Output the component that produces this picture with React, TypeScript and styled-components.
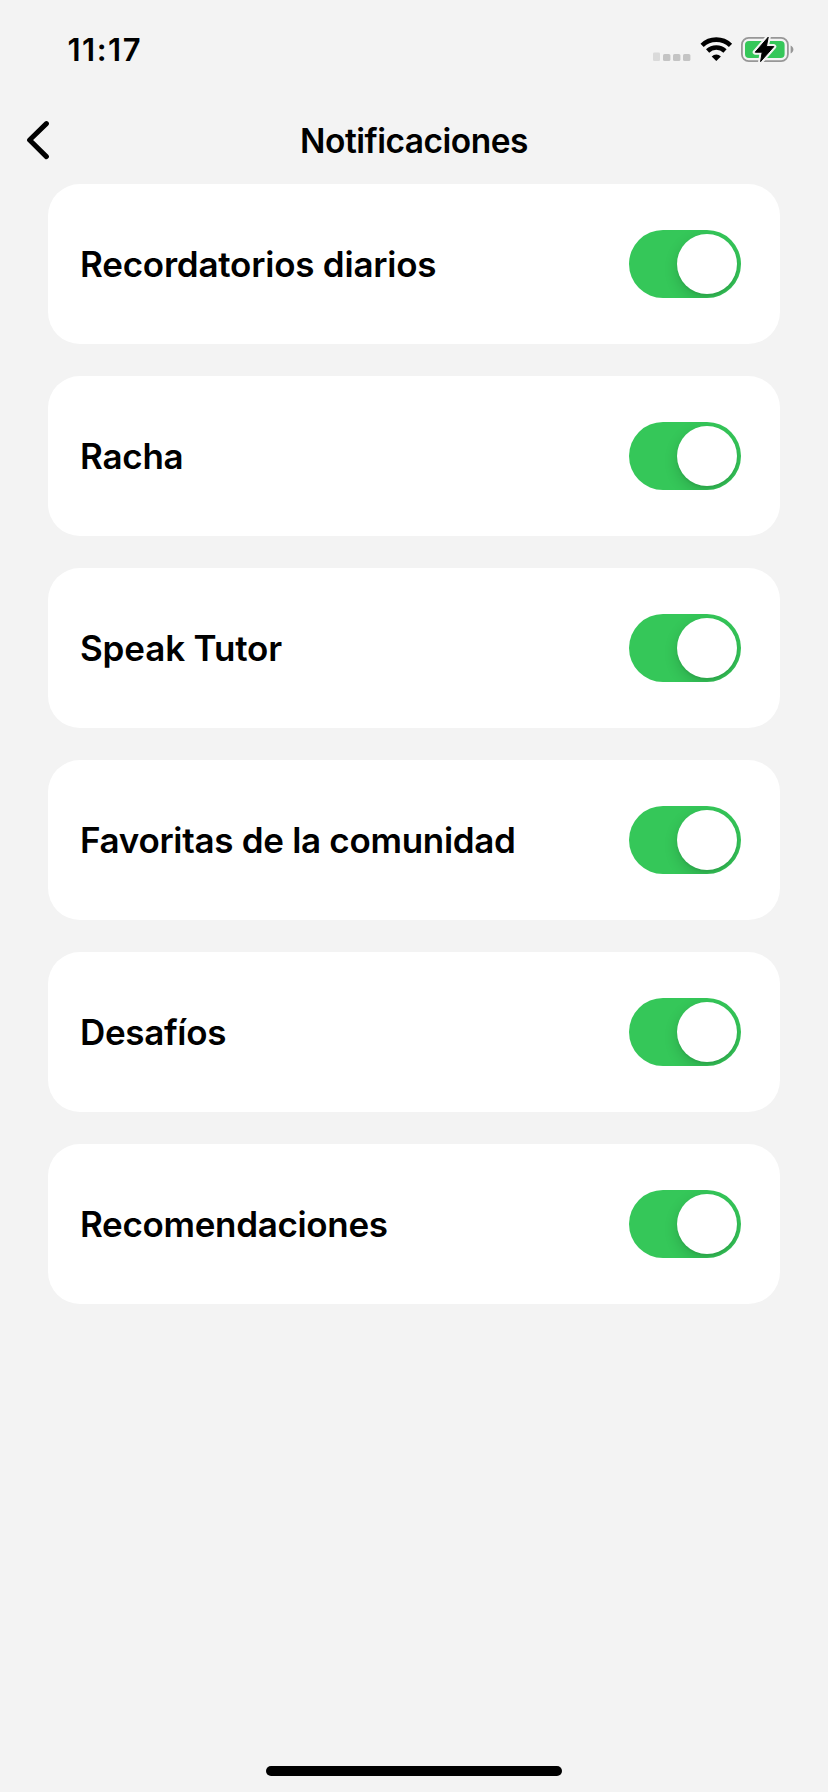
import React, { useState } from "react";
import styled, { createGlobalStyle } from "styled-components";

const GlobalStyle = createGlobalStyle`
  *, *::before, *::after { box-sizing: border-box; }
  html, body { margin: 0; background: #f3f3f3; }
  body {
    font-family: Inter, "Liberation Sans", sans-serif;
    color: #000;
    -webkit-font-smoothing: antialiased;
  }
`;

const Screen = styled.div`
  display: flex;
  flex-direction: column;
  width: 828px;
  height: 1792px;
  background: #f3f3f3;
  overflow: hidden;
`;

const StatusBar = styled.div`
  display: flex;
  align-items: center;
  justify-content: space-between;
  height: 100px;
  padding: 0 34px 0 67.5px;
`;

const Time = styled.span`
  font-size: 31px;
  line-height: 40px;
  font-weight: 600;
  letter-spacing: 1.5px;
`;

const StatusIcons = styled.svg`
  display: block;
  width: 142px;
  height: 32px;
`;

const Header = styled.header`
  display: grid;
  grid-template-columns: 80px 1fr 80px;
  align-items: center;
  height: 84px;
  padding-bottom: 4px;
`;

const BackButton = styled.button`
  display: flex;
  padding: 0 0 0 24px;
  border: 0;
  background: none;
  color: inherit;
`;

const Title = styled.h1`
  margin: 0;
  padding-top: 2px;
  text-align: center;
  font-size: 33.5px;
  line-height: 42px;
  font-weight: 600;
  letter-spacing: -0.5px;
`;

const List = styled.main`
  display: flex;
  flex-direction: column;
  flex: 1;
  gap: 32px;
  padding: 0 48px;
`;

const Card = styled.div`
  display: flex;
  align-items: center;
  justify-content: space-between;
  height: 160px;
  padding: 0 39px 0 32px;
  border-radius: 32px;
  background: #fff;
`;

const Label = styled.span<{ $tracking: number }>`
  font-size: 35px;
  line-height: 44px;
  font-weight: 600;
  letter-spacing: ${({ $tracking }) => $tracking}px;
`;

const Switch = styled.button<{ $on: boolean }>`
  display: flex;
  align-items: center;
  justify-content: ${({ $on }) => ($on ? "flex-end" : "flex-start")};
  width: 112px;
  height: 68px;
  padding: 4px;
  border: 0;
  border-radius: 34px;
  overflow: hidden;
  background: ${({ $on }) => ($on ? "#35c759" : "#e9e9ea")};
`;

const Knob = styled.span`
  width: 60px;
  height: 60px;
  border-radius: 50%;
  background: #fff;
  box-shadow: 0 5px 14px rgba(0, 0, 0, 0.16), 0 2px 2px rgba(0, 0, 0, 0.06);
`;

const HomeArea = styled.footer`
  display: flex;
  justify-content: center;
  padding-bottom: 16px;
`;

const HomeIndicator = styled.div`
  width: 296px;
  height: 10px;
  border-radius: 5px;
  background: #000;
`;

const items = [
  { name: "Recordatorios diarios", tracking: -0.22 },
  { name: "Racha", tracking: -0.25 },
  { name: "Speak Tutor", tracking: -0.15 },
  { name: "Favoritas de la comunidad", tracking: -0.3 },
  { name: "Desafíos", tracking: -0.35 },
  { name: "Recomendaciones", tracking: -0.32 },
];

function StatusGlyphs() {
  const bolt = "M116.2 3.2 L103.2 18.2 H110.2 L108.6 27.6 L121.8 12.6 H114.4 Z";
  return (
    <StatusIcons viewBox="0 0 142 32" aria-hidden="true">
      <rect x="1" y="18.5" width="7" height="8.5" rx="1.2" fill="#dadada" />
      <rect x="11" y="20" width="7.4" height="7" rx="1.6" fill="#c4c4c4" />
      <rect x="21" y="20" width="7.4" height="7" rx="1.6" fill="#c4c4c4" />
      <rect x="31" y="20" width="7.4" height="7" rx="1.6" fill="#c4c4c4" />
      <g transform="translate(0.8 0.2)">
        <g fill="none" stroke="#000" strokeWidth="4.6">
          <path d="M49.3 11.2 A20.4 20.4 0 0 1 77.7 11.2" />
          <path d="M54.8 16.8 A12.6 12.6 0 0 1 72.2 16.8" />
        </g>
        <path d="M63.5 26.8 L58.9 22.2 A6.8 6.8 0 0 1 68.1 22.2 Z" fill="#000" />
      </g>
      <rect x="89.9" y="3.9" width="46" height="23.2" rx="6.8" fill="none" stroke="#979797" strokeWidth="1.8" />
      <path d="M138.6 11.6 C142.3 13 142.3 18.2 138.6 19.6 Z" fill="#979797" />
      <rect x="93" y="7" width="39.6" height="17" rx="4" fill="#35c759" />
      <path d={bolt} fill="#f3f3f3" stroke="#f3f3f3" strokeWidth="5" strokeLinejoin="round" />
      <path d={bolt} fill="#000" stroke="#000" strokeWidth="1" strokeLinejoin="round" />
    </StatusIcons>
  );
}

function SettingRow({ name, tracking }: { name: string; tracking: number }) {
  const [on, setOn] = useState(true);
  return (
    <Card>
      <Label $tracking={tracking}>{name}</Label>
      <Switch $on={on} role="switch" aria-checked={on} aria-label={name} onClick={() => setOn(!on)}>
        <Knob />
      </Switch>
    </Card>
  );
}

export default function App() {
  return (
    <Screen>
      <GlobalStyle />
      <StatusBar>
        <Time>11:17</Time>
        <StatusGlyphs />
      </StatusBar>
      <Header>
        <BackButton aria-label="Atrás">
          <svg width="28" height="40" viewBox="0 0 28 40" fill="none" stroke="#000" strokeWidth="5" strokeLinecap="round" strokeLinejoin="round">
            <path d="M22.4 3.6 L5.6 20 L22.4 36.6" />
          </svg>
        </BackButton>
        <Title>Notificaciones</Title>
      </Header>
      <List>
        {items.map((item) => (
          <SettingRow key={item.name} {...item} />
        ))}
      </List>
      <HomeArea>
        <HomeIndicator />
      </HomeArea>
    </Screen>
  );
}
